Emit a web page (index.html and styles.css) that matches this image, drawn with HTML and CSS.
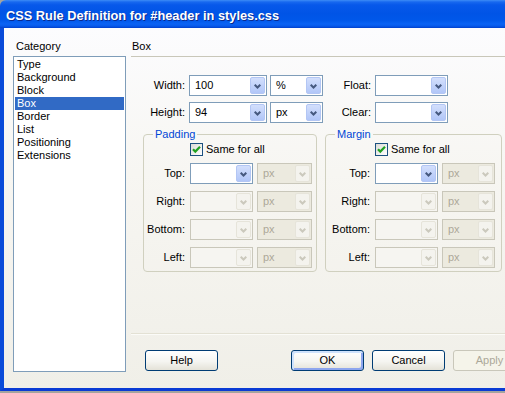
FILE: index.html
```html
<!DOCTYPE html>
<html lang="en">
<head>
<meta charset="utf-8">
<title>CSS Rule Definition for #header in styles.css</title>
<link rel="stylesheet" href="styles.css">
</head>
<body>
<svg class="defs" width="0" height="0" aria-hidden="true">
  <symbol id="chev" viewBox="0 0 7 5"><polyline points="0.7,0.7 3.5,3.5 6.3,0.7" fill="none" stroke="currentColor" stroke-width="2"/></symbol>
  <symbol id="tick" viewBox="0 0 11 11"><polyline points="2,5.2 4.3,7.6 9,2.8" fill="none" stroke="currentColor" stroke-width="2.2"/></symbol>
</svg>
<div class="win">
  <div class="titlebar">CSS Rule Definition for #header in styles.css</div>
  <div class="frame">
    <div class="cat">
      <div class="cat-label">Category</div>
      <ul class="list">
        <li>Type</li>
        <li>Background</li>
        <li>Block</li>
        <li class="sel">Box</li>
        <li>Border</li>
        <li>List</li>
        <li>Positioning</li>
        <li>Extensions</li>
      </ul>
    </div>
    <div class="panel">
      <div class="panel-head">Box</div>
      <div class="box-grid">
        <div class="lbl">Width:</div>
        <div class="combo"><span>100</span><i class="dd"><svg><use href="#chev"/></svg></i></div>
        <div class="combo"><span>%</span><i class="dd"><svg><use href="#chev"/></svg></i></div>
        <div class="lbl">Float:</div>
        <div class="combo"><span></span><i class="dd"><svg><use href="#chev"/></svg></i></div>
        <div class="lbl">Height:</div>
        <div class="combo"><span>94</span><i class="dd"><svg><use href="#chev"/></svg></i></div>
        <div class="combo"><span>px</span><i class="dd"><svg><use href="#chev"/></svg></i></div>
        <div class="lbl">Clear:</div>
        <div class="combo"><span></span><i class="dd"><svg><use href="#chev"/></svg></i></div>
      </div>
      <div class="groups">
        <fieldset class="grp pad">
          <legend>Padding</legend>
          <div class="check"><i class="cb"><svg><use href="#tick"/></svg></i><span>Same for all</span></div>
          <div class="lbl">Top:</div>
          <div class="combo"><span></span><i class="dd"><svg><use href="#chev"/></svg></i></div>
          <div class="combo off unit"><span>px</span><i class="dd"><svg><use href="#chev"/></svg></i></div>
          <div class="lbl">Right:</div>
          <div class="combo off"><span></span><i class="dd"><svg><use href="#chev"/></svg></i></div>
          <div class="combo off unit"><span>px</span><i class="dd"><svg><use href="#chev"/></svg></i></div>
          <div class="lbl">Bottom:</div>
          <div class="combo off"><span></span><i class="dd"><svg><use href="#chev"/></svg></i></div>
          <div class="combo off unit"><span>px</span><i class="dd"><svg><use href="#chev"/></svg></i></div>
          <div class="lbl">Left:</div>
          <div class="combo off"><span></span><i class="dd"><svg><use href="#chev"/></svg></i></div>
          <div class="combo off unit"><span>px</span><i class="dd"><svg><use href="#chev"/></svg></i></div>
        </fieldset>
        <fieldset class="grp mar">
          <legend>Margin</legend>
          <div class="check"><i class="cb"><svg><use href="#tick"/></svg></i><span>Same for all</span></div>
          <div class="lbl">Top:</div>
          <div class="combo"><span></span><i class="dd"><svg><use href="#chev"/></svg></i></div>
          <div class="combo off unit"><span>px</span><i class="dd"><svg><use href="#chev"/></svg></i></div>
          <div class="lbl">Right:</div>
          <div class="combo off"><span></span><i class="dd"><svg><use href="#chev"/></svg></i></div>
          <div class="combo off unit"><span>px</span><i class="dd"><svg><use href="#chev"/></svg></i></div>
          <div class="lbl">Bottom:</div>
          <div class="combo off"><span></span><i class="dd"><svg><use href="#chev"/></svg></i></div>
          <div class="combo off unit"><span>px</span><i class="dd"><svg><use href="#chev"/></svg></i></div>
          <div class="lbl">Left:</div>
          <div class="combo off"><span></span><i class="dd"><svg><use href="#chev"/></svg></i></div>
          <div class="combo off unit"><span>px</span><i class="dd"><svg><use href="#chev"/></svg></i></div>
        </fieldset>
      </div>
      <div class="sep"></div>
      <div class="buttons">
        <button type="button" class="btn help">Help</button>
        <button type="button" class="btn def">OK</button>
        <button type="button" class="btn">Cancel</button>
        <button type="button" class="btn off">Apply</button>
      </div>
    </div>
  </div>
</div>
</body>
</html>
```

FILE: styles.css
```css
* { box-sizing: border-box; margin: 0; padding: 0; }

html, body { width: 505px; height: 393px; overflow: hidden; }

body {
  font: 11px/13px "Liberation Sans", Arial, sans-serif;
  color: #000;
  background: #a4a4a0;
}

.defs { position: absolute; width: 0; height: 0; }

.win {
  width: 505px;
  height: 391px;
  display: flex;
  flex-direction: column;
}

.titlebar {
  height: 28px;
  padding: 6px 0 0 6px;
  line-height: 20px;
  font-weight: bold;
  font-size: 12.8px;
  color: #fff;
  white-space: nowrap;
  text-shadow: 1px 1px 0 #0b2a8e;
  border-top-left-radius: 6px;
  background: linear-gradient(#3d8cf6 0, #1768ef 2px, #0758ea 5px, #0054e6 14px, #0057e9 20px, #0a63f4 24px, #075aeb 26px, #0040cc 28px);
}

.frame {
  flex: 1;
  min-height: 0;
  display: flex;
  gap: 5px;
  padding: 12px 0 16px 9px;
  border-left: 4px solid #0a4bd9;
  border-bottom: 3px solid #0a3bd4;
  background: linear-gradient(#fcfcfe, #f7f6f2 40%, #f0efe8);
}

/* category column */
.cat {
  width: 113px;
  flex: none;
  display: flex;
  flex-direction: column;
}

.cat-label { padding-left: 3px; margin-bottom: 3px; }

.list {
  flex: 1;
  list-style: none;
  background: #fff;
  border: 1px solid #7f9db9;
  padding: 1px;
}

.list li { height: 13px; padding-left: 2px; }

.list .sel { background: #316ac5; color: #fff; }

/* right panel */
.panel {
  flex: 1;
  min-width: 0;
  display: flex;
  flex-direction: column;
}

.panel-head {
  padding: 0 0 3px 1px;
  border-bottom: 1px solid #c9c7b9;
}

.box-grid {
  display: grid;
  grid-template-columns: 55px 78px 53px 46px 73px;
  grid-auto-rows: 21px;
  column-gap: 3px;
  row-gap: 6px;
  margin-top: 18px;
}

.lbl {
  text-align: right;
  padding-right: 1px;
  line-height: 21px;
  white-space: nowrap;
}

.combo {
  display: flex;
  height: 21px;
  border: 1px solid #7f9db9;
  background: #fff;
}

.combo span {
  flex: 1;
  min-width: 0;
  padding-left: 5px;
  line-height: 19px;
}

.dd {
  width: 15px;
  flex: none;
  margin: 1px;
  display: flex;
  align-items: center;
  justify-content: center;
  border: 1px solid #b3c6f4;
  border-radius: 2px;
  background: linear-gradient(#d3dffc, #b1c6f8);
  color: #46597f;
}

.dd svg { width: 7px; height: 5px; display: block; margin-top: 1px; }

.combo.off { border-color: #c9c7ba; background: #f6f5f1; color: #aca899; }
.combo.off.unit { background: #eceadf; }
.combo.off .dd { border-color: #e6e4da; background: #f4f3ee; color: #cbc9bd; }

/* padding / margin groups */
.groups {
  display: flex;
  gap: 8px;
  margin: 4px 0 0 12px;
}

.grp {
  border: 1px solid #d0d0bf;
  border-radius: 4px;
  display: grid;
  grid-template-rows: 13px repeat(4, 21px);
  row-gap: 7px;
  column-gap: 4px;
  align-content: start;
  padding: 1px 4px 3px 3px;
}

.grp legend {
  margin-left: 6px;
  padding: 0 2px;
  line-height: 15px;
  color: #0046d5;
}

.pad { grid-template-columns: 39px 63px 55px; }
.mar { grid-template-columns: 42px 63px 53px; padding-right: 6px; }

.check {
  grid-column: 2 / span 2;
  display: flex;
  align-items: center;
  gap: 3px;
  white-space: nowrap;
}

.cb {
  width: 13px;
  height: 13px;
  flex: none;
  border: 1px solid #1c5180;
  background: linear-gradient(135deg, #dcdcd7, #fff);
  color: #21a121;
}

.cb svg { width: 11px; height: 11px; display: block; }

/* footer */
.sep {
  margin-top: auto;
  height: 2px;
  border-top: 1px solid #e3e1d4;
  border-bottom: 1px solid #fbfbf8;
}

.buttons {
  display: flex;
  gap: 8px;
  margin: 15px 0 1px;
  padding-left: 14px;
}

.btn {
  width: 73px;
  height: 21px;
  flex: none;
  border: 1px solid #003c74;
  border-radius: 3px;
  background: linear-gradient(#ffffff, #f5f5f1 55%, #e4e2d8);
  font: 11px/19px "Liberation Sans", Arial, sans-serif;
  color: #000;
  text-align: center;
  appearance: none;
}

.btn.help { margin-right: 65px; }

.btn.def { box-shadow: inset 2px 2px 0 #cfe2fc, inset -2px -2px 0 #8ea6ee; }

.btn.off {
  border-color: #c9c7ba;
  background: #f5f4ea;
  color: #aca899;
}
```
